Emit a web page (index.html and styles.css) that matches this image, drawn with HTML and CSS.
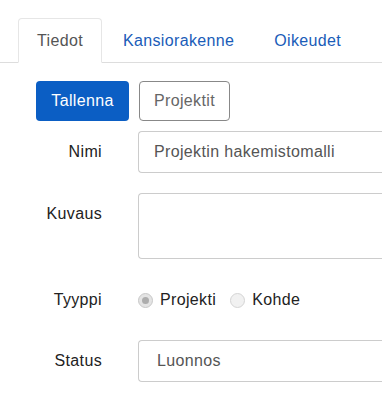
FILE: index.html
```html
<!DOCTYPE html>
<html lang="fi">
<head>
    <meta charset="UTF-8">
    <meta name="viewport" content="width=device-width, initial-scale=1.0">
    <title>Projekti</title>
    <link rel="stylesheet" href="styles.css">
</head>
<body>
    <ul class="tabs">
        <li class="tab active">Tiedot</li>
        <li class="tab">Kansiorakenne</li>
        <li class="tab">Oikeudet</li>
    </ul>

    <div class="toolbar">
        <button class="btn btn-primary">Tallenna</button>
        <button class="btn btn-default">Projektit</button>
    </div>

    <form class="form">
        <div class="row row-first">
            <label class="label" for="nimi">Nimi</label>
            <input class="field" id="nimi" type="text" value="Projektin hakemistomalli">
        </div>
        <div class="row row-wide">
            <label class="label" for="kuvaus">Kuvaus</label>
            <textarea class="field area" id="kuvaus"></textarea>
        </div>
        <div class="row row-wide">
            <span class="label">Tyyppi</span>
            <div class="radios">
                <span class="radio checked"></span><span class="radio-text">Projekti</span>
                <span class="radio"></span><span class="radio-text">Kohde</span>
            </div>
        </div>
        <div class="row row-status">
            <label class="label" for="status">Status</label>
            <div class="field select" id="status">Luonnos</div>
        </div>
    </form>
</body>
</html>
```

FILE: styles.css
```css
* {
    box-sizing: border-box;
    margin: 0;
    padding: 0;
    font-family: 'Liberation Sans', Arial, sans-serif;
    letter-spacing: 0.35px;
}

body {
    background: white;
    color: #333;
    font-size: 16px;
}

/* Reiterit */
.tabs {
    list-style: none;
    display: flex;
    padding: 18px 0 0 18px;
    border-bottom: 1px solid #ddd;
}

.tab {
    height: 45px;
    line-height: 44px;
    padding: 0 18px;
    margin-right: 2px;
    margin-bottom: -1px;
    border: 1px solid transparent;
    border-radius: 4px 4px 0 0;
    color: #1a5cb8;
}

.tab.active {
    color: #555;
    border-color: #e6e6e6 #e6e6e6 white;
    background: white;
}

/* Painikkeet */
.toolbar {
    display: flex;
    gap: 10px;
    padding: 18px 0 0 36px;
}

.btn {
    height: 40px;
    padding: 0;
    font-size: 16px;
    border-radius: 4px;
    border: 1px solid transparent;
    cursor: pointer;
}

.btn-primary {
    background: #0b5ec4;
    color: white;
    width: 93px;
}

.btn-default {
    background: white;
    color: #666;
    border-color: #888;
    width: 91px;
}

/* Lomake (kentät jatkuvat näkymän reunan yli) */
.form {
    width: 100%;
}

.row {
    display: grid;
    grid-template-columns: 102px 1fr;
    column-gap: 36px;
    align-items: start;
}

.row-first {
    margin-top: 10px;
}

.row-wide {
    margin-top: 20px;
}

.row-status {
    margin-top: 19px;
}

.label {
    text-align: right;
    line-height: 42px;
    color: #222;
}

.field {
    width: 100%;
    height: 42px;
    border: 1px solid #ccc;
    border-right: none;
    border-radius: 4px 0 0 4px;
    padding: 0 15px;
    font-size: 16px;
    color: #555;
    outline: none;
    background: white;
}

.area {
    height: 66px;
    resize: none;
}

.select {
    line-height: 40px;
    padding-left: 18px;
}

.radios {
    display: flex;
    align-items: center;
    height: 42px;
}

.radio {
    width: 15px;
    height: 15px;
    border-radius: 50%;
    border: 1px solid #d4d4d4;
    background: #f1f1f1;
    position: relative;
}

.radio.checked {
    border-color: #c8c8c8;
    background: #e4e4e4;
}

.radio.checked::after {
    content: "";
    position: absolute;
    left: 3px;
    top: 3px;
    width: 7px;
    height: 7px;
    border-radius: 50%;
    background: #adadad;
}

.radio-text {
    margin: 0 14px 0 7px;
    color: #222;
}
```
